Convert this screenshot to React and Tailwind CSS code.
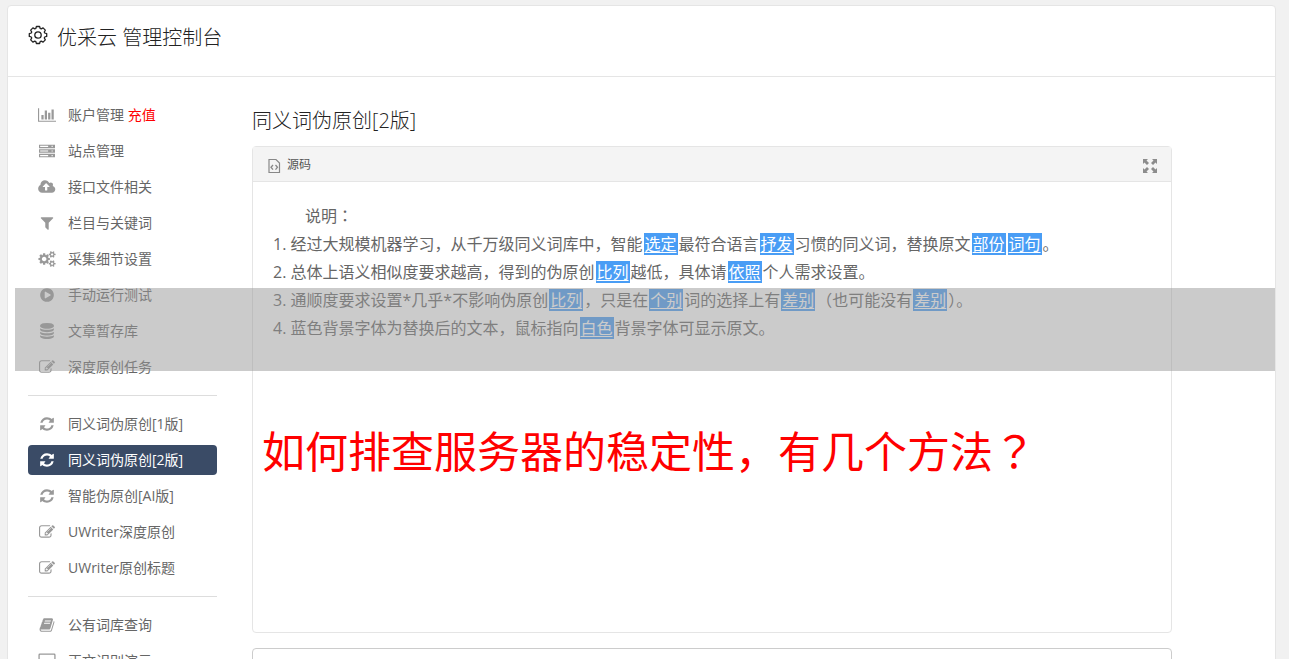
import React, { useState } from "react";

const ICONS = {
  chart: {
    box: "0 0 2048 1792",
    d: "M640 896v512h-256v-512h256zm384-512v1024h-256v-1024h256zm1024 1152v128h-2048v-1536h128v1408h1920zm-640-896v768h-256v-768h256zm384-384v1152h-256v-1152h256z",
  },
  server: {
    box: "0 0 1792 1792",
    d: "M0 192h1792v384h-1792zM128 320v128h896v-128zM1408 320v128h128v-128zM0 704h1792v384h-1792zM128 832v128h896v-128zM1408 832v128h128v-128zM0 1216h1792v384h-1792zM128 1344v128h896v-128zM1408 1344v128h128v-128z",
  },
  upload: {
    box: "0 0 1856 1792",
    d: "M1216 864q0-14-9-23l-352-352q-9-9-23-9t-23 9l-351 351q-10 12-10 24 0 14 9 23t23 9h224v352q0 13 9.5 22.5t22.5 9.5h192q13 0 22.5-9.5t9.5-22.5v-352h224q13 0 22.5-9.5t9.5-22.5zm640 288q0 159-112.5 271.5t-271.5 112.5h-1088q-185 0-316.5-131.5t-131.5-316.5q0-130 70-240t188-165q-2-30-2-43 0-212 150-362t362-150q156 0 285.5 87t188.5 231q71-62 166-62 106 0 181 75t75 181q0 76-41 138 130 31 213.5 135.5t83.5 238.5z",
  },
  filter: {
    box: "0 0 1792 1792",
    d: "M1595 295q17 41-14 70l-493 493v742q0 42-39 59-13 5-25 5-27 0-45-19l-256-256q-19-19-19-45v-486l-493-493q-31-29-14-70 17-39 59-39h1280q42 0 59 39z",
  },
  cogs: {
    box: "0 0 1920 1792",
    d: "M896 896q0-106-75-181t-181-75-181 75-75 181 75 181 181 75 181-75 75-181zm768 512q0-52-38-90t-90-38-90 38-38 90q0 53 37.5 90.5t90.5 37.5 90.5-37.5 37.5-90.5zm0-1024q0-52-38-90t-90-38-90 38-38 90q0 53 37.5 90.5t90.5 37.5 90.5-37.5 37.5-90.5zm-384 421v185q0 10-7 19.5t-16 10.5l-155 24q-11 35-32 76 34 48 90 115 7 10 7 20 0 12-7 19-23 30-82.5 89.5t-78.5 59.5q-11 0-21-7l-115-90q-37 19-77 31-11 108-23 155-7 24-30 24h-186q-11 0-20-7.5t-10-17.5l-23-153q-34-10-75-31l-118 89q-7 7-20 7-11 0-21-8-144-133-144-160 0-9 7-19 10-14 41-53t47-61q-23-44-35-82l-152-24q-10-1-17-9.5t-7-19.5v-185q0-10 7-19.5t16-10.5l155-24q11-35 32-76-34-48-90-115-7-11-7-20 0-12 7-20 22-30 82-89t79-59q11 0 21 7l115 90q34-18 77-32 11-108 23-154 7-24 30-24h186q11 0 20 7.5t10 17.5l23 153q34 10 75 31l118-89q8-7 20-7 11 0 21 8 144 133 144 160 0 9-7 19-12 16-42 54t-45 60q23 48 34 82l152 23q10 2 17 10.5t7 19.5zm640 533v140q0 16-149 31-12 27-30 52 51 113 51 138 0 4-4 7-122 71-124 71-8 0-46-47t-52-68q-20 2-30 2t-30-2q-14 21-52 68t-46 47q-2 0-124-71-4-3-4-7 0-25 51-138-18-25-30-52-149-15-149-31v-140q0-16 149-31 13-29 30-52-51-113-51-138 0-4 4-7 4-2 35-20t59-34 30-16q8 0 46 46.5t52 67.5q20-2 30-2t30 2q51-71 92-112l6-2q4 0 124 70 4 3 4 7 0 25-51 138 17 23 30 52 149 15 149 31zm0-1024v140q0 16-149 31-12 27-30 52 51 113 51 138 0 4-4 7-122 71-124 71-8 0-46-47t-52-68q-20 2-30 2t-30-2q-14 21-52 68t-46 47q-2 0-124-71-4-3-4-7 0-25 51-138-18-25-30-52-149-15-149-31v-140q0-16 149-31 13-29 30-52-51-113-51-138 0-4 4-7 4-2 35-20t59-34 30-16q8 0 46 46.5t52 67.5q20-2 30-2t30 2q51-71 92-112l6-2q4 0 124 70 4 3 4 7 0 25-51 138 17 23 30 52 149 15 149 31z",
  },
  play: {
    box: "0 0 1792 1792",
    d: "M896 128q209 0 385.5 103t279.5 279.5 103 385.5-103 385.5-279.5 279.5-385.5 103-385.5-103-279.5-279.5-103-385.5 103-385.5 279.5-279.5 385.5-103zm384 823q32-18 32-55t-32-55l-544-320q-31-19-64-1-32 19-32 56v640q0 37 32 56 16 8 32 8 17 0 32-9z",
  },
  database: {
    box: "0 0 1792 1792",
    d: "M896 768q237 0 443-43t325-127v170q0 69-103 128t-280 93.5-385 34.5-385-34.5-280-93.5-103-128v-170q119 84 325 127t443 43zm0 768q237 0 443-43t325-127v170q0 69-103 128t-280 93.5-385 34.5-385-34.5-280-93.5-103-128v-170q119 84 325 127t443 43zm0-384q237 0 443-43t325-127v170q0 69-103 128t-280 93.5-385 34.5-385-34.5-280-93.5-103-128v-170q119 84 325 127t443 43zm0-1152q208 0 385 34.5t280 93.5 103 128v128q0 69-103 128t-280 93.5-385 34.5-385-34.5-280-93.5-103-128v-128q0-69 103-128t280-93.5 385-34.5z",
  },
  edit: {
    box: "0 0 1792 1792",
    d: "M888 1184l116-116-152-152-116 116v56h96v96h56zm440-720q-16-16-33 1l-350 350q-17 17-1 33t33-1l350-350q17-17 1-33zm80 594v190q0 119-84.5 203.5t-203.5 84.5h-832q-119 0-203.5-84.5t-84.5-203.5v-832q0-119 84.5-203.5t203.5-84.5h832q63 0 117 25 15 7 18 23 3 17-9 29l-49 49q-14 14-32 8-23-6-45-6h-832q-66 0-113 47t-47 113v832q0 66 47 113t113 47h832q66 0 113-47t47-113v-126q0-13 9-22l64-64q15-15 35-7t20 29zm-96-738l288 288-672 672h-288v-288zm444 132l-92 92-288-288 92-92q28-28 68-28t68 28l152 152q28 28 28 68t-28 68z",
  },
  refresh: {
    box: "0 0 1792 1792",
    d: "M1639 1056q0 5-1 7-64 268-268 434.5t-478 166.5q-146 0-282.5-55t-243.5-157l-129 129q-19 19-45 19t-45-19-19-45v-448q0-26 19-45t45-19h448q26 0 45 19t19 45-19 45l-137 137q71 66 161 102t187 36q134 0 250-65t186-179q11-17 53-117 8-23 30-23h192q13 0 22.5 9.5t9.5 22.5zm25-800v448q0 26-19 45t-45 19h-448q-26 0-45-19t-19-45 19-45l138-138q-148-137-349-137-134 0-250 65t-186 179q-11 17-53 117-8 23-30 23h-199q-13 0-22.5-9.5t-9.5-22.5v-7q65-268 270-434.5t480-166.5q146 0 284 55.5t245 156.5l130-129q19-19 45-19t45 19 19 45z",
  },
  book: {
    box: "0 0 1792 1792",
    d: "M1703 478q40 57 18 129l-275 906q-19 64-76.5 107.5t-122.5 43.5h-923q-77 0-148.5-53.5t-99.5-131.5q-24-67-2-127 0-4 3-27t4-37q1-8-3-21.5t-3-19.5q2-11 8-21t16.5-23.5 16.5-23.5q23-38 45-91.5t30-91.5q3-10 .5-30t-.5-28q3-11 17-28t17-23q21-36 42-92t25-90q1-9-2.5-32t.5-28q4-13 22-30.5t22-22.5q19-26 42.5-84.5t27.5-96.5q1-8-3-25.5t-2-26.5q2-8 9-18t18-23 17-21q8-12 16.5-30.5t15-35 16-36 19.5-32 26.5-23.5 36-11.5 47.5 5.5l-1 3q38-9 51-9h761q74 0 114 56t18 130l-274 906q-36 119-71.5 153.5t-128.5 34.5h-869q-27 0-38 15-11 16-1 43 24 70 144 70h923q29 0 56-15.5t35-41.5l300-987q7-22 5-57 38 15 59 43zm-1064 2q-4 13 2 22.5t20 9.5h608q13 0 25.5-9.5t16.5-22.5l21-64q4-13-2-22.5t-20-9.5h-608q-13 0-25.5 9.5t-16.5 22.5zm-83 256q-4 13 2 22.5t20 9.5h608q13 0 25.5-9.5t16.5-22.5l21-64q4-13-2-22.5t-20-9.5h-608q-13 0-25.5 9.5t-16.5 22.5z",
  },
  desktop: {
    box: "0 0 1920 1792",
    d: "M160 64h1600q160 0 160 160v1024q0 160-160 160h-512v128h128v128h-832v-128h128v-128h-512q-160 0-160-160v-1024q0-160 160-160zM176 208q-32 0-32 32v848h1632v-848q0-32-32-32z",
  },
};

const MENU = [
  [
    { icon: "chart", label: "账户管理", extra: "充值" },
    { icon: "server", label: "站点管理" },
    { icon: "upload", label: "接口文件相关" },
    { icon: "filter", label: "栏目与关键词" },
    { icon: "cogs", label: "采集细节设置" },
    { icon: "play", label: "手动运行测试" },
    { icon: "database", label: "文章暂存库" },
    { icon: "edit", label: "深度原创任务" },
  ],
  [
    { icon: "refresh", label: "同义词伪原创[1版]" },
    { icon: "refresh", label: "同义词伪原创[2版]" },
    { icon: "refresh", label: "智能伪原创[AI版]" },
    { icon: "edit", label: "UWriter深度原创" },
    { icon: "edit", label: "UWriter原创标题" },
  ],
  [
    { icon: "book", label: "公有词库查询" },
    { icon: "desktop", label: "正文识别演示" },
  ],
];

const MenuIcon = ({ name }) => (
  <svg
    viewBox={ICONS[name].box}
    fill="currentColor"
    fillRule="evenodd"
    className="h-4 w-[18px] shrink-0"
    aria-hidden="true"
  >
    <path d={ICONS[name].d} />
  </svg>
);

const MenuItem = ({ item, active, onSelect }) => (
  <li>
    <a
      href="#"
      onClick={(e) => {
        e.preventDefault();
        onSelect(item.label);
      }}
      className={
        active
          ? "flex h-[30px] items-center gap-3 rounded bg-[#3a4b66] px-[10px] text-white"
          : "flex h-[30px] items-center gap-3 rounded px-[10px] text-[#666]"
      }
    >
      <span className={active ? "text-white" : "text-[#999]"}>
        <MenuIcon name={item.icon} />
      </span>
      <span className="whitespace-nowrap">
        {item.label}
        {item.extra && <span className="text-[#f00]"> {item.extra}</span>}
      </span>
    </a>
  </li>
);

// A replaced word, highlighted in blue
const Word = ({ children }) => (
  <span className="mx-px bg-[#499df5] px-px text-white underline underline-offset-2">
    {children}
  </span>
);

// Full-width mark set in the middle of its cell
const Mark = ({ children }) => (
  <span className="font-['Noto_Sans_CJK_TC',sans-serif]">{children}</span>
);

const Editor = () => (
  <section className="h-[487px] rounded border border-[#e5e5e5]">
    <div className="flex h-[35px] items-center justify-between border-b border-[#e5e5e5] bg-[#f4f4f4] px-[14px] text-xs text-[#555]">
      <button type="button" className="flex items-center gap-[6px] pt-[2px]">
        <svg viewBox="0 0 14 16" className="mt-[2px] h-4 w-[14px]" fill="none" stroke="#888">
          <path d="M2 1.5h7l3.500 3.500v9.500h-10.500z" strokeWidth="1.2" />
          <path d="M6 7l-2 2.300 2 2.300M8.500 7l2 2.300-2 2.300" strokeWidth="1.3" />
        </svg>
        源码
      </button>
      <button type="button" aria-label="全屏" className="mt-[3px]">
        <svg viewBox="0 0 14 14" className="h-[14px] w-[14px]" fill="#8c8c8c">
          <path d="M0 0h5L3.5 1.5 6 4 4 6 1.5 3.5 0 5zM14 0v5l-1.5-1.5L10 6 8 4l2.500-2.500L9 0zM0 14V9l1.500 1.500L4 8l2 2-2.500 2.500L5 14zM14 14H9l1.500-1.500L8 10l2-2 2.500 2.500L14 9z" />
        </svg>
      </button>
    </div>
    <div className="px-5 pt-[19px] text-base leading-7 text-[#666]">
      <p className="indent-8">
        说明<Mark>：</Mark>
      </p>
      <p>
        1. 经过大规模机器学习，从千万级同义词库中，智能<Word>选定</Word>最符合语言
        <Word>抒发</Word>习惯的同义词，替换原文<Word>部份</Word>
        <Word>词句</Word>。
      </p>
      <p>
        2. 总体上语义相似度要求越高，得到的伪原创<Word>比列</Word>越低，具体请
        <Word>依照</Word>个人需求设置。
      </p>
      <p>
        3. 通顺度要求设置*几乎*不影响伪原创<Word>比列</Word>，只是在<Word>个别</Word>
        词的选择上有<Word>差别</Word>（也可能没有<Word>差别</Word>）。
      </p>
      <p>
        4. 蓝色背景字体为替换后的文本，鼠标指向<Word>白色</Word>背景字体可显示原文。
      </p>
    </div>
  </section>
);

const App = () => {
  const [current, setCurrent] = useState("同义词伪原创[2版]");

  return (
    <div className="relative h-screen overflow-hidden bg-[#f1f1f1] pt-[5px] pr-[13px] pl-[7px] font-['Open_Sans','Noto_Sans_CJK_SC',sans-serif]">
      <div className="min-h-full rounded-t border border-[#e5e5e5] bg-white">
        <header className="flex h-[71px] items-start gap-[9px] border-b border-[#e5e5e5] px-5 pt-4 text-[#222]">
          <svg viewBox="0 0 20 20" className="mt-[3px] h-5 w-5" fill="none" stroke="currentColor" strokeWidth="1.3">
            <path d="M8.400 1.500h3.200l.6 2 1 .4 1.900-1 2.200 2.200-1 1.900.4 1 2 .6v2.800l-2 .6-.4 1 1 1.900-2.200 2.200-1.900-1-1 .4-.6 2H8.400l-.6-2-1-.4-1.900 1-2.200-2.200 1-1.900-.4-1-2-.6V8.600l2-.6.4-1-1-1.900 2.200-2.200 1.900 1 1-.4z" strokeLinejoin="round" />
            <circle cx="10" cy="10" r="3.200" />
          </svg>
          <h1 className="text-xl leading-8 font-light">优采云 管理控制台</h1>
        </header>
        <div className="flex">
          <nav className="w-[209px] shrink-0 px-[20px] pt-[23px] text-sm">
            {MENU.map((group, i) => (
              <ul
                key={i}
                className={
                  i === 0
                    ? "flex w-[189px] flex-col gap-[6px]"
                    : "mt-[13px] flex w-[189px] flex-col gap-[6px] border-t border-[#ddd] pt-[13px]"
                }
              >
                {group.map((item) => (
                  <MenuItem
                    key={item.label}
                    item={item}
                    active={item.label === current}
                    onSelect={setCurrent}
                  />
                ))}
              </ul>
            ))}
          </nav>
          <main className="min-w-0 flex-1 pt-7 pr-[103px] pl-[35px]">
            <h2 className="mb-[9px] text-xl leading-8 font-light text-[#222]">
              同义词伪原创[2版]
            </h2>
            <Editor />
            <textarea
              aria-label="内容"
              className="mt-[15px] block h-40 w-full resize-none rounded border border-[#ccc]"
            />
          </main>
        </div>
      </div>
      {/* Caption and translucent band over the page */}
      <div className="pointer-events-none absolute top-[288px] right-[14px] left-[15px] h-[83px] bg-[#979797]/50" />
      <p className="pointer-events-none absolute top-[417px] left-[262px] text-[43px] leading-[64px] whitespace-nowrap text-[#f00]">
        如何排查服务器的稳定性，有几个方法<Mark>？</Mark>
      </p>
    </div>
  );
};

export default App;
